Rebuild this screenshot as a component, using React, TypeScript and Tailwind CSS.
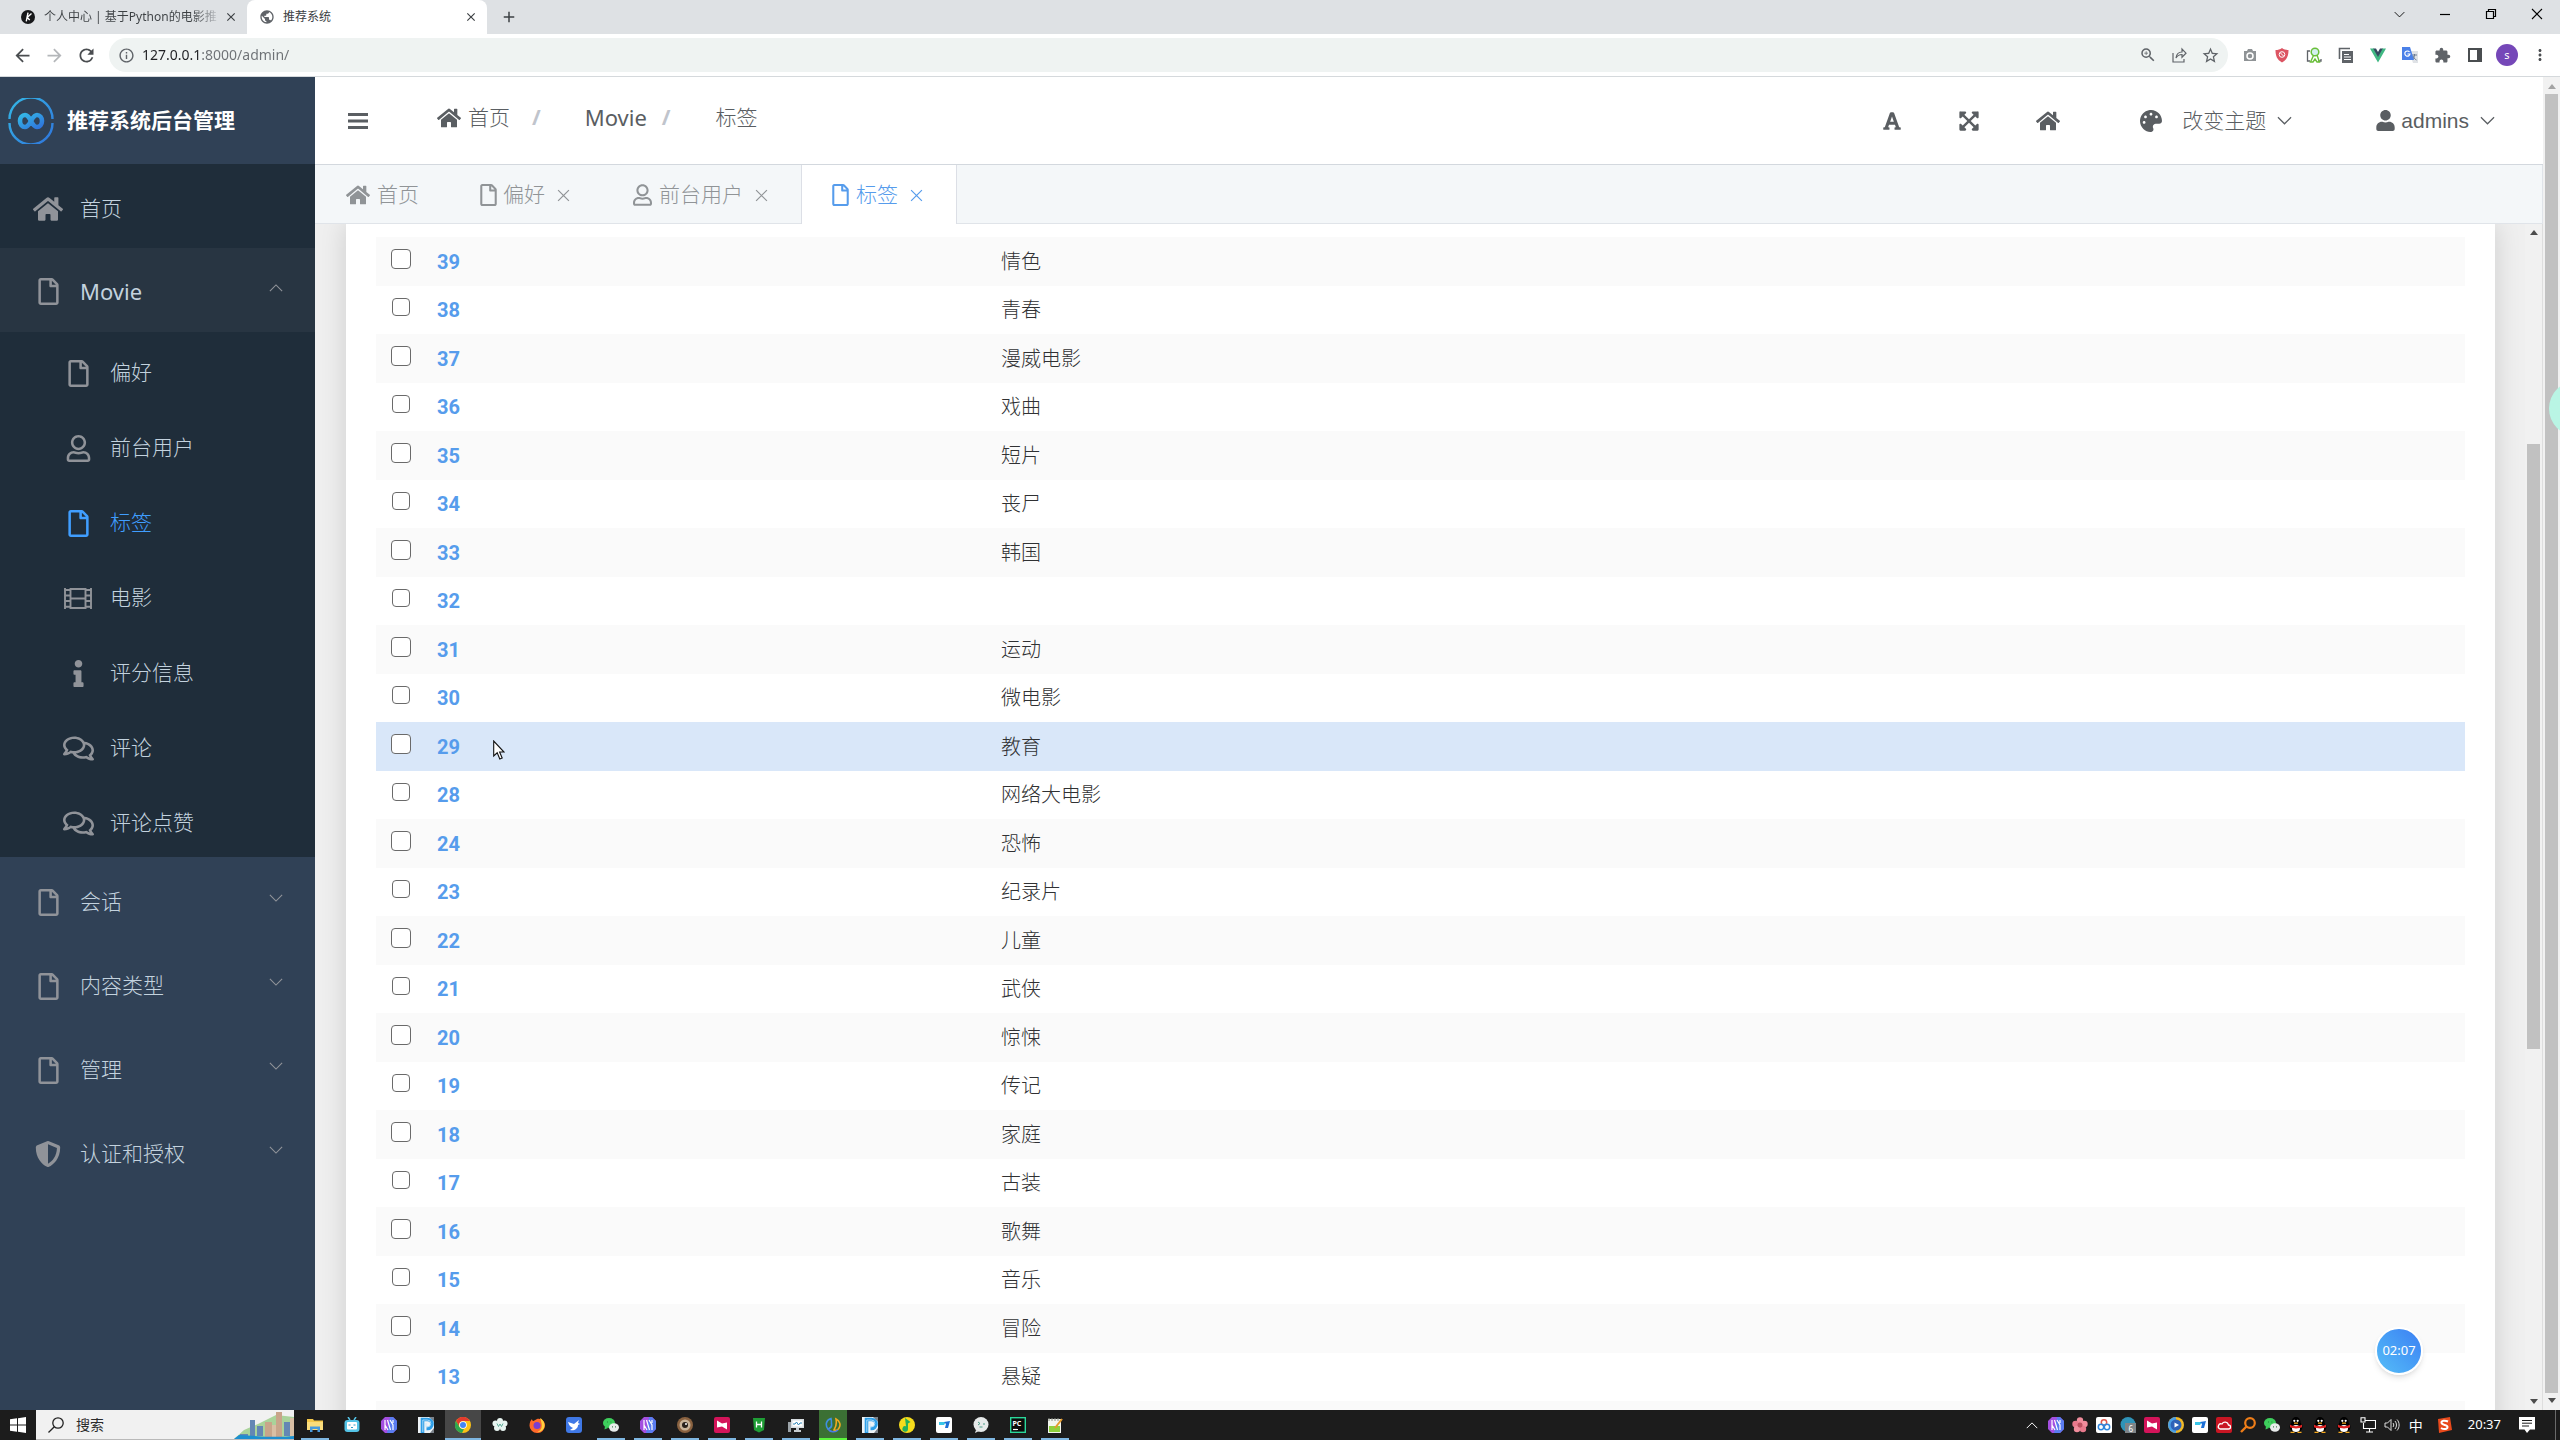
import React, { useState } from "react";
import {
  FaExpandArrowsAlt,
  FaFont,
  FaHome,
  FaInfo,
  FaPalette,
  FaRegComments,
  FaRegFile,
  FaRegUser,
  FaShieldAlt,
  FaUser,
} from "react-icons/fa";
import {
  MdAdd,
  MdArrowBack,
  MdArrowForward,
  MdClose,
  MdExtension,
  MdInfoOutline,
  MdMoreVert,
  MdPublic,
  MdRefresh,
  MdStarBorder,
  MdZoomIn,
} from "react-icons/md";

/* ---------- small drawings ---------- */

const Chevron = ({ up = false, className = "" }: { up?: boolean; className?: string }) => (
  <svg viewBox="0 0 16 9" className={className} fill="none" stroke="currentColor" strokeWidth="1.3" aria-hidden="true">
    <path d={up ? "M1 8 8 1l7 7" : "M1 1l7 7 7-7"} />
  </svg>
);

const Cross = ({ className = "" }: { className?: string }) => (
  <svg viewBox="0 0 12 12" className={className} fill="none" stroke="currentColor" strokeWidth="1.1" aria-hidden="true">
    <path d="M1 1l10 10M11 1 1 11" />
  </svg>
);

const FilmIcon = ({ className = "" }: { className?: string }) => (
  <svg viewBox="0 0 28 21" className={className} fill="none" stroke="currentColor" strokeWidth="1.9" aria-hidden="true">
    <path d="M1 0v21M6.5 0v21M21.5 0v21M27 0v21M6.5 1h15M6.5 10.5h15M6.5 20h15" />
    <path d="M1 2h5.500M1 7.500h5.500M1 13h5.500M1 18.800h5.500M21.500 2H27M21.500 7.500H27M21.500 13H27M21.500 18.800H27" />
  </svg>
);

const Logo = () => (
  <svg viewBox="0 0 46 46" className="size-[46px] shrink-0" fill="none" aria-hidden="true">
    <defs>
      <linearGradient id="logo" x1="0" y1="0" x2="1" y2="1">
        <stop offset="0" stopColor="#34b8e6" />
        <stop offset="1" stopColor="#2f74dc" />
      </linearGradient>
    </defs>
    <path d="M1.500 21a21.500 21.500 0 0 1 43 0M1.500 25a21.500 21.500 0 0 0 43 0" stroke="url(#logo)" strokeWidth="2.400" />
    <path
      d="M23 23c-2-4-3.500-6-6-6a5 6 0 0 0 0 12c3 0 4.500-3.500 6-6s3-6 6-6a5 6 0 0 1 0 12c-2.500 0-4-2-6-6z"
      stroke="url(#logo)"
      strokeWidth="4.600"
    />
  </svg>
);

/* ---------- browser ---------- */

const BrowserTabs = () => (
  <div className="flex h-[34px] shrink-0 items-stretch bg-[#dee1e4] text-[12px] text-[#3c4043]">
    <div className="flex w-[247px] items-center pl-[21px] pr-[9px]">
      <svg viewBox="0 0 16 16" className="size-[14px] shrink-0" aria-hidden="true">
        <circle cx="8" cy="8" r="8" fill="#17181a" />
        <path d="M8 3 6 13M12 4 7 8.500l3 3" stroke="#fff" strokeWidth="1.600" fill="none" />
      </svg>
      <span className="ml-[9px] whitespace-nowrap bg-[linear-gradient(to_right,#3c4043_148px,#b9bcc0_172px)] bg-clip-text text-transparent">
        个人中心 | 基于Python的电影推
      </span>
      <button type="button" aria-label="关闭标签页" className="ml-auto">
        <MdClose className="size-[14px]" />
      </button>
    </div>
    <div className="flex w-[240px] items-center rounded-t-lg bg-white pl-3 pr-[9px]">
      <MdPublic className="size-4 shrink-0 text-[#5f6368]" />
      <span className="ml-[8px]">推荐系统</span>
      <button type="button" aria-label="关闭标签页" className="ml-auto">
        <MdClose className="size-[14px]" />
      </button>
    </div>
    <button type="button" aria-label="新标签页" className="ml-[13px]">
      <MdAdd className="size-[18px]" />
    </button>
    <div className="ml-auto flex items-center gap-[34px] pb-[6px] pr-[17px] text-black">
      <button type="button" aria-label="搜索标签页">
        <Chevron className="h-[7px] w-[11px]" />
      </button>
      <button type="button" aria-label="最小化">
        <svg viewBox="0 0 12 12" className="size-3" stroke="currentColor" strokeWidth="1.200"><path d="M1 6.500h10" /></svg>
      </button>
      <button type="button" aria-label="还原">
        <svg viewBox="0 0 12 12" className="size-3" fill="none" stroke="currentColor" strokeWidth="1.200">
          <path d="M1.500 3.500h7v7h-7zM3.500 3.500v-2h7v7h-2" />
        </svg>
      </button>
      <button type="button" aria-label="关闭">
        <Cross className="size-3" />
      </button>
    </div>
  </div>
);

const Extensions = () => (
  <div className="flex items-center gap-4">
    <svg viewBox="0 0 16 16" className="size-4">
      <path d="M2 4h3l1-2h4l1 2h3v10H2z" fill="#8f9396" />
      <circle cx="8" cy="9" r="3" fill="none" stroke="#fff" strokeWidth="1.500" />
    </svg>
    <svg viewBox="0 0 16 16" className="size-4">
      <path d="M8 1c2 1.500 4 2 6.500 2 0 6-1.500 9.500-6.500 12.500C3 12.500 1.500 9 1.500 3 4 3 6 2.500 8 1z" fill="#dc5563" />
      <circle cx="8" cy="7.500" r="2.800" fill="none" stroke="#fff" />
      <path d="M6.500 6l3 3" stroke="#fff" />
    </svg>
    <svg viewBox="0 0 16 16" className="size-4" fill="none">
      <path d="M4 4H1.500v10H4M12 14h3v-2" stroke="#5f6368" strokeWidth="1.300" />
      <circle cx="9" cy="5" r="3.800" fill="#d3f0ee" stroke="#6abf3a" strokeWidth="1.500" />
      <path d="M7.500 8.500l-3 6.500h2.500l2-3 2 3h2.500l-2.500-7" stroke="#6abf3a" strokeWidth="1.400" />
    </svg>
    <svg viewBox="0 0 16 16" className="size-4" fill="none">
      <path d="M1.500 12V1.500H12" stroke="#5f6368" strokeWidth="1.600" />
      <path d="M4 4h11v12H4z" fill="#5f6368" />
      <path d="M6 7.500h5M6 10h7M6 12.500h7" stroke="#fff" strokeWidth="1.200" />
    </svg>
    <svg viewBox="0 0 16 16" className="size-4">
      <path d="M0 1.500h4L8 9l4-7.500h4L8 15.500z" fill="#41b883" />
      <path d="M3.200 1.500H6L8 5l2-3.500h2.800L8 10z" fill="#34495e" />
    </svg>
    <svg viewBox="0 0 16 16" className="size-4">
      <path d="M7 4h9v12h-5z" fill="#dfe2e6" />
      <path d="M10 8h5M12.500 7v1c0 2-1 3.500-2 4.500M11 9c.5 1.500 1.500 3 3.500 4" stroke="#6b7a90" fill="none" />
      <path d="M0 0h8l4 13H0z" fill="#4a80e8" />
      <path d="M7.500 5A2.600 2.600 0 1 0 8 7H5.500" stroke="#fff" strokeWidth="1.200" fill="none" />
    </svg>
    <MdExtension className="size-[17px] text-[#5f6368]" />
    <svg viewBox="0 0 16 16" className="size-4">
      <path d="M2 2h12v12H2z" fill="none" stroke="#4a4d50" strokeWidth="2" />
      <path d="M10 2h4v12h-4z" fill="#4a4d50" />
    </svg>
    <span className="-mx-[3px] flex size-[22px] items-center justify-center rounded-full bg-[#7547b8] text-[11px] text-white">s</span>
    <button type="button" aria-label="更多">
      <MdMoreVert className="size-[18px] text-[#4a4d50]" />
    </button>
  </div>
);

const Toolbar = () => (
  <div className="flex h-[43px] shrink-0 items-center border-b border-[#d5d9dc] bg-white pl-[12px] pr-[11px] text-[#4a4d50]">
    <button type="button" aria-label="后退"><MdArrowBack className="size-[21px]" /></button>
    <button type="button" aria-label="前进" className="ml-[11px] text-[#b4b7ba]"><MdArrowForward className="size-[21px]" /></button>
    <button type="button" aria-label="刷新" className="ml-[11px]"><MdRefresh className="size-[21px]" /></button>
    <div className="ml-[12px] flex h-[34px] flex-1 items-center rounded-full bg-[#eff3f2] pl-[9px] pr-[8px]">
      <MdInfoOutline className="size-[17px] text-[#5f6368]" />
      <input
        type="text"
        aria-label="地址"
        defaultValue="127.0.0.1:8000/admin/"
        className="ml-[7px] flex-1 bg-[linear-gradient(to_right,#202124_60px,#6d7175_60px)] bg-clip-text pb-px text-[14px] text-transparent outline-none"
      />
      <div className="flex items-center gap-[14px] text-[#5f6368]">
        <MdZoomIn className="size-[18px]" />
        <svg viewBox="0 0 16 16" className="size-[16px]" fill="none" stroke="currentColor" strokeWidth="1.200">
          <path d="M2 6v9h11v-3M5 11c.5-4 2.500-6 6-6V2l4 4.200-4 4V7.500c-3 0-4.500 1-6 3.500z" />
        </svg>
        <MdStarBorder className="size-[19px]" />
      </div>
    </div>
    <div className="ml-[14px]">
      <Extensions />
    </div>
  </div>
);

/* ---------- sidebar ---------- */

const subMenu = [
  { label: "偏好", icon: <FaRegFile className="size-[27px]" /> },
  { label: "前台用户", icon: <FaRegUser className="size-[27px]" /> },
  { label: "标签", icon: <FaRegFile className="size-[27px]" />, active: true },
  { label: "电影", icon: <FilmIcon className="h-[21px] w-[28px]" /> },
  { label: "评分信息", icon: <FaInfo className="size-[27px]" /> },
  { label: "评论", icon: <FaRegComments className="size-[31px]" /> },
  { label: "评论点赞", icon: <FaRegComments className="size-[31px]" /> },
];

const menu = [
  { label: "会话", icon: <FaRegFile className="size-[27px]" /> },
  { label: "内容类型", icon: <FaRegFile className="size-[27px]" /> },
  { label: "管理", icon: <FaRegFile className="size-[27px]" /> },
  { label: "认证和授权", icon: <FaShieldAlt className="size-[26px]" /> },
];

const Sidebar = () => (
  <aside className="flex w-[315px] shrink-0 flex-col overflow-hidden bg-[#304156] text-[21px] font-light text-[#c3d2de]">
    <div className="flex h-[87px] shrink-0 items-center pl-[8px] font-bold text-white">
      <Logo />
      <span className="ml-[13px]">推荐系统后台管理</span>
    </div>
    <nav className="flex flex-col">
      <a href="#home" className="flex h-[84px] items-center bg-[#1f2d3a] pl-[32px] pt-[6px]">
        <span className="flex w-8 justify-center text-[#909399]"><FaHome className="size-[30px]" /></span>
        <span className="ml-4">首页</span>
      </a>
      <button type="button" className="flex h-[84px] items-center bg-[#283542] pl-[32px] pr-[32px] pt-[3px]">
        <span className="flex w-8 justify-center text-[#909399]"><FaRegFile className="size-[27px]" /></span>
        <span className="ml-4 text-[22px] font-normal">Movie</span>
        <Chevron up className="mb-2 ml-auto h-2 w-[14px] text-[#909399]" />
      </button>
      <div className="flex flex-col bg-[#1f2d3a]">
        {subMenu.map((item) => (
          <a
            key={item.label}
            href="#"
            className={`flex h-[75px] items-center pb-1 pl-[62px] pt-[11px] ${item.active ? "text-[#409eff]" : ""}`}
          >
            <span className={`flex w-8 justify-center ${item.active ? "" : "text-[#909399]"}`}>{item.icon}</span>
            <span className="ml-4">{item.label}</span>
          </a>
        ))}
      </div>
      {menu.map((item) => (
        <button key={item.label} type="button" className="flex h-[84px] items-center pl-[32px] pr-[32px] pt-[6px]">
          <span className="flex w-8 justify-center text-[#909399]">{item.icon}</span>
          <span className="ml-4">{item.label}</span>
          <Chevron className="mb-2 ml-auto h-2 w-[14px] text-[#909399]" />
        </button>
      ))}
    </nav>
  </aside>
);

/* ---------- header + page tabs ---------- */

const Header = () => (
  <header className="flex h-[88px] shrink-0 items-center border-b border-[#d3d8de] bg-white pl-[33px] pr-[48px] text-[21px] text-[#5a5e62]">
    <button type="button" aria-label="折叠菜单">
      <svg viewBox="0 0 20 18" className="h-[18px] w-5" fill="currentColor"><path d="M0 1h20v3H0zM0 7.500h20v3H0zM0 14h20v3H0z" /></svg>
    </button>
    <nav className="ml-[69px] flex items-center pb-[6px] font-light">
      <a href="#home" className="flex items-center gap-[7px]">
        <FaHome className="size-[24px]" />
        首页
      </a>
      <span className="ml-[22px] font-bold text-[#c0c4cc]">/</span>
      <a href="#movie" className="ml-[44px] text-[22px] font-normal">Movie</a>
      <span className="ml-[15px] font-bold text-[#c0c4cc]">/</span>
      <span className="ml-[45px]">标签</span>
    </nav>
    <div className="ml-auto flex items-center">
      <button type="button" aria-label="字体"><FaFont className="size-[20px]" /></button>
      <button type="button" aria-label="全屏" className="ml-[56px]"><FaExpandArrowsAlt className="size-[22px]" /></button>
      <a href="#home" aria-label="首页" className="ml-[56px]"><FaHome className="size-[24px]" /></a>
      <button type="button" className="ml-[80px] flex items-center font-light">
        <FaPalette className="size-[22px]" />
        <span className="ml-[20px]">改变主题</span>
        <Chevron className="ml-[11px] h-[9px] w-[15px]" />
      </button>
      <button type="button" className="ml-[84px] flex items-center font-['Liberation_Sans',sans-serif]">
        <FaUser className="h-[21px] w-[19px]" />
        <span className="ml-[6px]">admins</span>
        <Chevron className="ml-[11px] h-[9px] w-[15px]" />
      </button>
    </div>
  </header>
);

const PageTabs = () => (
  <div className="flex h-[59px] shrink-0 border-b border-r border-[#e0e4e9] bg-[#f4f7f9] text-[21px] font-light text-[#909497]">
    <button type="button" className="flex items-center gap-[7px] px-[31px] pt-[2px]">
      <FaHome className="size-[24px]" />
      首页
    </button>
    <button type="button" className="flex items-center pl-[30px] pr-[33px] pt-[2px]">
      <FaRegFile className="h-[22px] w-[17px]" />
      <span className="ml-[6px]">偏好</span>
      <Cross className="ml-[12px] size-[13px]" />
    </button>
    <button type="button" className="flex items-center pl-[30px] pr-[33px] pt-[2px]">
      <FaRegUser className="h-[22px] w-[19px]" />
      <span className="ml-[7px]">前台用户</span>
      <Cross className="ml-[12px] size-[13px]" />
    </button>
    <button type="button" className="-mb-px flex items-center border-x border-[#dcdfe6] bg-white pl-[30px] pr-[33px] pt-px text-[#569cec]">
      <FaRegFile className="h-[22px] w-[17px]" />
      <span className="ml-[7px]">标签</span>
      <Cross className="ml-[12px] size-[13px]" />
    </button>
  </div>
);

/* ---------- table ---------- */

const tags: [number, string][] = [
  [39, "情色"],
  [38, "青春"],
  [37, "漫威电影"],
  [36, "戏曲"],
  [35, "短片"],
  [34, "丧尸"],
  [33, "韩国"],
  [32, ""],
  [31, "运动"],
  [30, "微电影"],
  [29, "教育"],
  [28, "网络大电影"],
  [24, "恐怖"],
  [23, "纪录片"],
  [22, "儿童"],
  [21, "武侠"],
  [20, "惊悚"],
  [19, "传记"],
  [18, "家庭"],
  [17, "古装"],
  [16, "歌舞"],
  [15, "音乐"],
  [14, "冒险"],
  [13, "悬疑"],
];

const HOVERED_ID = 29;

const TagTable = () => {
  const [selected, setSelected] = useState<number[]>([]);

  const toggle = (id: number) =>
    setSelected((prev) => (prev.includes(id) ? prev.filter((x) => x !== id) : [...prev, id]));

  return (
    <table className="w-full table-fixed border-collapse text-left text-[20px] text-[#303133]" aria-label="标签">
      <colgroup>
        <col className="w-[50px]" />
        <col className="w-[27%]" />
        <col />
      </colgroup>
      <tbody>
        {tags.map(([id, name], i) => {
          const striped = i % 2 === 0;
          const bg = id === HOVERED_ID ? "bg-[#d9e7f9]" : striped ? "bg-[#fafafa]" : "bg-white";
          return (
            <tr key={id} className={`${striped ? "h-[49px]" : "h-12"} ${bg}`}>
              <td className="p-0 pt-3 align-top">
                <input
                  type="checkbox"
                  aria-label={`选择 ${id}`}
                  checked={selected.includes(id)}
                  onChange={() => toggle(id)}
                  className={`mx-auto block appearance-none rounded-[4px] border border-[#6a6a6a] bg-white checked:bg-[#409eff] ${
                    striped ? "size-5" : "size-[18px]"
                  }`}
                />
              </td>
              <td className="p-0 pl-[11px] font-['Roboto',sans-serif] font-bold leading-6 text-[#569cec]">
                <a href={`#tag-${id}`}>{id}</a>
              </td>
              <td className="p-0 pl-[11px] font-light leading-6">{name}</td>
            </tr>
          );
        })}
        <tr className="h-[49px] bg-[#fafafa]">
          <td colSpan={3} />
        </tr>
      </tbody>
    </table>
  );
};

/* ---------- scrollbars ---------- */

const Arrow = ({ down = false, className = "" }: { down?: boolean; className?: string }) => (
  <svg viewBox="0 0 8 5" className={`h-[5px] w-2 ${className}`} fill="currentColor" aria-hidden="true">
    <path d={down ? "M0 0h8L4 5z" : "M0 5h8L4 0z"} />
  </svg>
);

const InnerScrollbar = () => (
  <div className="flex w-[18px] shrink-0 flex-col items-center border-r border-[#dedede] bg-[#f1f1f1] py-[6px] text-[#4d4d4d]">
    <Arrow />
    <div className="flex w-full flex-1 flex-col items-center py-[5px]">
      <div className="grow-[204]" />
      <div className="w-[13px] grow-[606] bg-[#c1c1c1]" />
      <div className="grow-[345]" />
    </div>
    <Arrow down />
  </div>
);

const OuterScrollbar = () => (
  <div className="flex w-[17px] shrink-0 flex-col items-center bg-[#f1f1f1] py-[7px] text-[#a3a3a3]">
    <Arrow />
    <div className="my-[5px] w-[13px] flex-1 bg-[#c1c1c1]" />
    <Arrow down className="text-[#4d4d4d]" />
  </div>
);

/* ---------- taskbar ---------- */

const glyphs: Record<string, React.ReactNode> = {
  folder: (
    <>
      <path d="M0 2h6l1 1.500h9V13H0z" fill="#f5c84b" />
      <path d="M0 5h16v8H0z" fill="#fbdd7c" />
      <path d="M3 9.500h10V15h-2.500v-3h-5v3H3z" fill="#4a9bdc" />
    </>
  ),
  tv: (
    <>
      <path d="M4 0l2 3M12 0l-2 3" stroke="#54c3e6" strokeWidth="1.500" />
      <rect x=".5" y="3" width="15" height="12" rx="3" fill="#54c3e6" />
      <rect x="3" y="5" width="10" height="7.500" rx="1" fill="#fff" />
      <path d="M4.500 8h2M9.500 8h2M7 10.500h2" stroke="#2f9cc8" />
    </>
  ),
  maze: (
    <>
      <path d="M4 0h8l4 4v8l-4 4H4l-4-4V4z" fill="#a44fe0" />
      <path d="M9 0h3l4 4v8l-4 4H6z" fill="#5a7cf0" />
      <path d="M4 3v10M6.500 3l3 10M9 3l3 5v5M12 3v3M4 8l3 5" stroke="#fff" strokeWidth="1.200" fill="none" />
    </>
  ),
  pico: (
    <>
      <path d="M0 0h16v16H0z" fill="#eef3f7" />
      <path d="M11 0h5v5zM12 16l4-5v5z" fill="#7b828a" />
      <path d="M4.500 16V2.500h5a4.500 4.500 0 0 1 0 9h-1" fill="none" stroke="#2d9ee8" strokeWidth="3.600" />
      <path d="M4.800 15V3h4.500a3.500 3.500 0 0 1 0 7H8V6" fill="none" stroke="#bfe3fa" strokeWidth=".8" />
    </>
  ),
  chrome: (
    <>
      <circle cx="8" cy="8" r="8" fill="#fbc116" />
      <path d="M1 4a8 8 0 0 1 14 0H8a4 4 0 0 0-3.500 6z" fill="#e33b2e" />
      <path d="M1 4l3.500 6A4 4 0 0 0 9 12l-2 4A8 8 0 0 1 1 4z" fill="#2da94f" />
      <circle cx="8" cy="8" r="3.800" fill="#fff" />
      <circle cx="8" cy="8" r="3" fill="#4285f4" />
    </>
  ),
  flower: (
    <>
      <circle cx="8" cy="4" r="3" fill="#e8f5f1" />
      <circle cx="3.500" cy="6.500" r="3" fill="#e8f5f1" />
      <circle cx="12.500" cy="6.500" r="3" fill="#e8f5f1" />
      <circle cx="5" cy="11" r="3" fill="#e8f5f1" />
      <circle cx="11" cy="11" r="3" fill="#e8f5f1" />
      <circle cx="8" cy="8" r="3" fill="#e8f5f1" />
      <path d="M5 6.500l1.500 3L8 7l1.500 2.500 1.500-3" stroke="#3d9c86" strokeWidth=".8" fill="none" />
    </>
  ),
  firefox: (
    <>
      <path d="M8 2c4-1 8 2 8 6.500A7.500 7.500 0 0 1 8 16 7.500 7.500 0 0 1 .5 8.500C.5 5 2 3 3 2c0 1 .5 2 1.500 2z" fill="#ff6a2a" />
      <path d="M11 1c2 1 5 4 4.500 8-.5 4-4 6-7 6 4-2 6-5 2.500-14z" fill="#ffd23c" />
      <circle cx="8" cy="8.500" r="3.500" fill="#7a3fd0" />
    </>
  ),
  bird: (
    <>
      <rect width="16" height="16" rx="3" fill="#3f78e6" />
      <path d="M2 5l6 2 5-4-1 3 2 1-2 1c0 4-4 6-8 5l3-2C4 10 3 8 2 5z" fill="#fff" />
    </>
  ),
  wechat: (
    <>
      <ellipse cx="6" cy="6" rx="6" ry="5" fill="#3ecf5c" />
      <path d="M2 9l-.5 3.500L5 11z" fill="#3ecf5c" />
      <ellipse cx="11" cy="10.500" rx="5" ry="4.200" fill="#e9eceb" />
      <path d="M4 5h.8M7.500 5h.8M9 9.800h.8M12 9.800h.8" stroke="#236b35" strokeWidth="1.200" />
    </>
  ),
  eye: (
    <>
      <circle cx="8" cy="8" r="8" fill="#8a6240" />
      <circle cx="8" cy="8" r="5.500" fill="#c9b49b" />
      <circle cx="8" cy="8" r="3" fill="#28211d" />
      <circle cx="9" cy="7" r="1" fill="#fff" />
    </>
  ),
  ribbon: (
    <>
      <rect width="16" height="16" rx="2" fill="#d4145a" />
      <path d="M3 3.500l5 3 5-1v7l-5-3-5 1z" fill="#fff" />
    </>
  ),
  hbuilder: (
    <>
      <path d="M2 1h12l-1 12-5 2.500L3 13z" fill="#1f9e36" />
      <path d="M5.500 4.500v6M10.500 4.500v6M5.500 7.500h5" stroke="#fff" strokeWidth="1.300" />
    </>
  ),
  monitor: (
    <>
      <path d="M0 5h3v10H0z" fill="#9ba3a8" />
      <path d="M3 2h13v9H3z" fill="#d7dde1" />
      <path d="M4.500 3.500h10v6h-10z" fill="#fff" />
      <path d="M5 7h2l1.500-2 2 3 1.500-2h2" stroke="#2f86b8" fill="none" />
      <path d="M8 11h3v2h2v2H6v-2h2z" fill="#c6ccd0" />
    </>
  ),
  navicat: (
    <>
      <path d="M6 1.500C1 3 0 8 3 12c3-1 4-3 3.500-5 0-2 0-4-.5-5.500z" fill="none" stroke="#3f8fe0" strokeWidth="1.600" />
      <path d="M11 2c4 2 5 6 3 9-1 2-3 3-5 2 2-3 3-6 2-11z" fill="none" stroke="#f2a91e" strokeWidth="1.600" />
      <path d="M3 12c2 3 7 4 10 1" fill="none" stroke="#4d7be0" strokeWidth="1.600" />
    </>
  ),
  qqmusic: (
    <>
      <circle cx="8" cy="8" r="8" fill="#f6dc1c" />
      <path d="M6 1l5.500 4-2.500 1.500V12a2.800 2.800 0 1 1-2-2.800z" fill="#23b05c" />
    </>
  ),
  tim: (
    <>
      <rect width="16" height="16" rx="2" fill="#fff" />
      <path d="M3 5h7l-2 3H3z" fill="#38c5e8" />
      <path d="M8 5l6-1-2 7H9l1-4z" fill="#1c6fd6" />
    </>
  ),
  chat: (
    <>
      <circle cx="8" cy="7.500" r="7.500" fill="#e6e9e9" />
      <path d="M3 13l-1 3 4-2z" fill="#e6e9e9" />
      <path d="M5 5l2 1.500L5 8M10 7h2M6.500 10h3" stroke="#4a9d86" fill="none" />
    </>
  ),
  pycharm: (
    <>
      <rect x=".7" y=".7" width="14.600" height="14.600" fill="#0b0b0b" stroke="#2bd79a" strokeWidth="1.400" />
      <text x="2.500" y="8.500" fontSize="7" fontWeight="bold" fill="#fff">PC</text>
      <path d="M3 12.500h5" stroke="#fff" strokeWidth="1.200" />
    </>
  ),
  notepad: (
    <>
      <path d="M1 2h13v14H1z" fill="#f3f5ee" />
      <path d="M2 1v3M5 1v3M8 1v3M11 1v3" stroke="#8a8f86" />
      <path d="M2 9h11v6H2z" fill="#8ed03c" />
      <path d="M8 11l7-9" stroke="#e59a2c" strokeWidth="2" />
    </>
  ),
  pinkflower: (
    <>
      <circle cx="8" cy="3.500" r="3.200" fill="#f08c9c" />
      <circle cx="3.500" cy="7" r="3.200" fill="#e7798c" />
      <circle cx="12.500" cy="7" r="3.200" fill="#f08c9c" />
      <circle cx="5" cy="12" r="3.200" fill="#f08c9c" />
      <circle cx="11" cy="12" r="3.200" fill="#e7798c" />
      <circle cx="8" cy="8" r="2.500" fill="#b9505f" />
    </>
  ),
  cloud: (
    <>
      <rect width="16" height="16" rx="2" fill="#fff" />
      <circle cx="8" cy="5.500" r="2.700" fill="none" stroke="#e2574c" strokeWidth="1.500" />
      <circle cx="5" cy="10" r="2.700" fill="none" stroke="#2f86dd" strokeWidth="1.500" />
      <circle cx="11" cy="10" r="2.700" fill="none" stroke="#2f86dd" strokeWidth="1.500" />
    </>
  ),
  badge: (
    <>
      <circle cx="8" cy="7.500" r="7.500" fill="#2f93b8" />
      <rect x="5" y="6" width="11" height="10" fill="#7e8488" />
      <text x="8.500" y="14.500" fontSize="8" fill="#fff">6</text>
    </>
  ),
  player: (
    <>
      <circle cx="8" cy="8" r="8" fill="#f0b928" />
      <path d="M8 0a8 8 0 0 0 0 16z" fill="#4a9fe6" />
      <circle cx="8" cy="8" r="5.500" fill="#2f62b8" />
      <path d="M6.500 5.500v5L11 8z" fill="#fff" />
    </>
  ),
  redcloud: (
    <>
      <rect width="16" height="16" rx="2" fill="#c81623" />
      <path d="M4 12h8.500a2 2 0 0 0 0-4A3.500 3.500 0 0 0 6 7a2.600 2.600 0 0 0-2 5z" fill="none" stroke="#fff" strokeWidth="1.300" />
    </>
  ),
  search: (
    <>
      <circle cx="10" cy="6" r="4.800" fill="none" stroke="#ee7d18" strokeWidth="2.200" />
      <path d="M6.500 9.500 1 15" stroke="#ee7d18" strokeWidth="2.400" />
    </>
  ),
  penguin: (
    <>
      <ellipse cx="8" cy="5" rx="4.500" ry="5" fill="#000" />
      <ellipse cx="8" cy="10" rx="6.500" ry="5.500" fill="#000" />
      <ellipse cx="8" cy="11.500" rx="4" ry="3.500" fill="#fff" />
      <path d="M2 7.500c3 2.200 9 2.200 12 0v2.800c-3 1.500-9 1.500-12 0z" fill="#e02424" />
      <circle cx="6.300" cy="3.800" r="1.100" fill="#fff" />
      <circle cx="9.700" cy="3.800" r="1.100" fill="#fff" />
      <path d="M6 6.200h4M2.500 15.300h4M9.500 15.300h4" stroke="#f5a81c" strokeWidth="1.300" />
    </>
  ),
  network: (
    <path d="M5 3.500h10.500v8H3.500V6M1 .8h4V5H1zM9.500 11.500V15M6 15h7" fill="none" stroke="#fff" strokeWidth="1.100" />
  ),
  volume: (
    <path d="M1 6h2.500L7 2.500v11L3.500 10H1zM9 6c1 1.200 1 2.800 0 4M11 4c2 2.300 2 5.700 0 8M13 2.500c2.800 3 2.800 8 0 11" fill="none" stroke="#ddd" />
  ),
  sogou: (
    <>
      <path d="M2 2l12-2 2 13-13 3z" fill="#e84a1c" />
      <path d="M12 4.500C9 3 5 3.500 5.500 6s6 1.500 6 4-4 2.500-6.500 1" stroke="#fff" strokeWidth="2" fill="none" />
    </>
  ),
};

const Glyph = ({ name }: { name: string }) => (
  <svg viewBox="0 0 16 16" className="size-4" aria-hidden="true">
    {glyphs[name]}
  </svg>
);

const apps: { icon: string; state?: "open" | "focus" | "alert" }[] = [
  { icon: "folder", state: "open" },
  { icon: "tv" },
  { icon: "maze" },
  { icon: "pico" },
  { icon: "chrome", state: "focus" },
  { icon: "flower" },
  { icon: "firefox" },
  { icon: "bird" },
  { icon: "wechat", state: "open" },
  { icon: "maze", state: "open" },
  { icon: "eye", state: "open" },
  { icon: "ribbon", state: "open" },
  { icon: "hbuilder", state: "open" },
  { icon: "monitor", state: "open" },
  { icon: "navicat", state: "alert" },
  { icon: "pico", state: "open" },
  { icon: "qqmusic", state: "open" },
  { icon: "tim", state: "open" },
  { icon: "chat", state: "open" },
  { icon: "pycharm", state: "open" },
  { icon: "notepad", state: "open" },
];

const appState = {
  none: "w-7 border-transparent",
  open: "w-7 border-[#7fb7e2]",
  focus: "-mx-1 w-9 border-[#7fb7e2] bg-[#474747]",
  alert: "w-7 border-[#5cf53c] bg-[#3b7034]",
};

const tray = [
  "maze", "pinkflower", "cloud", "badge", "ribbon", "player", "tim", "redcloud",
  "search", "wechat", "penguin", "penguin", "penguin", "network", "volume",
];

const Taskbar = () => (
  <footer className="flex h-[30px] shrink-0 items-stretch bg-[#1c1c1c] text-white">
    <button type="button" aria-label="开始" className="flex w-9 items-center justify-center">
      <svg viewBox="0 0 16 16" className="size-4" fill="#fff">
        <path d="M0 2.200 7 1.300V7.500H0zM8 1.200 16 0v7.500H8zM0 8.500h7v6.200L0 13.800zM8 8.500h8V16l-8-1.200z" />
      </svg>
    </button>
    <label className="flex w-[258px] items-center border-b border-[#b9b9b9] bg-[#f1f1f1] pl-[12px]">
      <svg viewBox="0 0 16 16" className="size-4" fill="none" stroke="#222" strokeWidth="1.300">
        <circle cx="10" cy="6" r="5.200" />
        <path d="M6.300 9.700.5 15.500" />
      </svg>
      <input
        type="text"
        aria-label="搜索"
        placeholder="搜索"
        className="ml-3 w-[158px] text-[14px] leading-5 text-black outline-none placeholder:text-[#2b2b2b]"
      />
      <svg viewBox="0 0 60 29" className="h-[29px] w-[60px]" aria-hidden="true">
        <path d="M0 29l10-9 14-6 18-9 18 2v22z" fill="#a9d39a" />
        <path d="M6 24h8v5H6zM16 10h5v16h-5zM23 16h6v10h-6zM50 12h7v14h-7z" fill="#6487b4" />
        <path d="M31 12h7v15h-7zM42 2h6v25h-6z" fill="#c8a58a" />
        <path d="M38 15h4v12h-4zM56 8h4v18h-4z" fill="#d9bfa4" />
        <path d="M0 29l5-4c18 1 36 3 55 1v3z" fill="#1d8fd0" />
      </svg>
    </label>
    <div className="ml-[7px] flex gap-[9px]">
      {apps.map((app, i) => (
        <button
          key={i}
          type="button"
          aria-label={app.icon}
          className={`flex items-center justify-center border-b-2 pt-[2px] ${appState[app.state ?? "none"]}`}
        >
          <Glyph name={app.icon} />
        </button>
      ))}
    </div>
    <div className="ml-auto flex items-center">
      <Chevron up className="mr-[10px] h-[7px] w-3" />
      <div className="flex gap-2">
        {tray.map((icon, i) => (
          <Glyph key={i} name={icon} />
        ))}
      </div>
      <span className="ml-[9px] text-[14px]">中</span>
      <span className="ml-[13px]"><Glyph name="sogou" /></span>
      <time className="ml-4 text-[13px]">20:37</time>
      <svg viewBox="0 0 16 16" className="ml-[18px] size-4" aria-hidden="true">
        <path d="M0 0h16v12.500h-5L8 16l-2.500-3.500H0z" fill="#fff" />
        <path d="M3 3.500h10M3 6.200h10M3 9h7" stroke="#1c1c1c" />
      </svg>
      <span className="ml-5 mr-1 h-[30px] w-px bg-[#6a6a6a]" />
    </div>
  </footer>
);

/* ---------- things that float over the page ---------- */

const Pointer = () => (
  <svg viewBox="0 0 12 20" className="absolute left-[493px] top-[740px] h-5 w-3" aria-hidden="true">
    <path d="M.7 1v15l3.500-3.200L6.800 19l2.400-1-2.600-6H11z" fill="#fff" stroke="#111" strokeWidth="1.100" />
  </svg>
);

const TimerBubble = () => (
  <div className="absolute bottom-[65px] right-[137px] flex size-12 items-center justify-center rounded-full border-2 border-white bg-linear-to-tr from-[#56bdf7] to-[#3d7ff3] text-[13px] text-white shadow-md">
    02:07
  </div>
);

const App: React.FC = () => (
  <div className="relative flex h-screen w-full flex-col overflow-hidden bg-white font-['Noto_Sans','Noto_Sans_CJK_SC',sans-serif]">
    <BrowserTabs />
    <Toolbar />
    <div className="flex min-h-0 flex-1">
      <Sidebar />
      <div className="flex min-w-0 flex-1 flex-col">
        <Header />
        <PageTabs />
        <div className="flex min-h-0 flex-1">
          <main className="min-w-0 flex-1 overflow-hidden bg-[#efefef] pl-[31px] pr-[30px]">
            <div className="bg-white px-[30px] pt-[13px] shadow-[0_0_25px_rgba(0,0,0,0.14)]">
              <TagTable />
            </div>
          </main>
          <InnerScrollbar />
        </div>
      </div>
      <OuterScrollbar />
    </div>
    <Taskbar />
    <Pointer />
    <TimerBubble />
    <div className="absolute left-full top-[381px] -ml-[11px] size-[55px] rounded-full bg-[#b9f5e4]" />
  </div>
);

export default App;
